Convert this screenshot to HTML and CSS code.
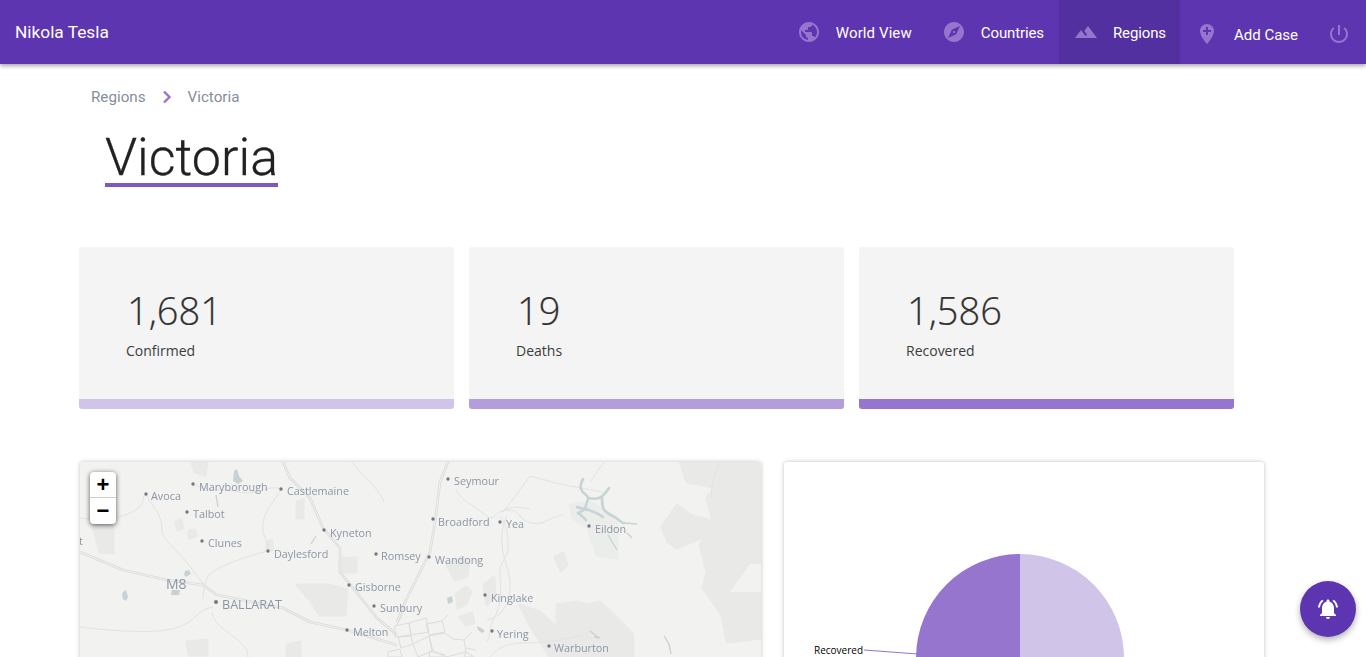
FILE: index.html
```html
<!DOCTYPE html>
<html lang="en">
<head>
    <meta charset="UTF-8">
    <meta name="viewport" content="width=device-width, initial-scale=1.0">
    <title>Victoria</title>
    <link rel="stylesheet" href="styles.css">
</head>
<body>
    <header class="topbar">
        <div class="brand">Nikola Tesla</div>
        <nav class="nav">
            <a class="nav-item world">
                <svg class="nav-icon" viewBox="0 0 24 24"><path d="M12 2C6.48 2 2 6.48 2 12s4.48 10 10 10 10-4.48 10-10S17.52 2 12 2zm-1 17.93c-3.95-.49-7-3.85-7-7.93 0-.62.08-1.21.21-1.79L9 15v1c0 1.1.9 2 2 2v1.93zm6.9-2.54c-.26-.81-1-1.39-1.9-1.39h-1v-3c0-.55-.45-1-1-1H8v-2h2c.55 0 1-.45 1-1V7h2c1.1 0 2-.9 2-2v-.41c2.93 1.19 5 4.06 5 7.41 0 2.08-.8 3.97-2.1 5.39z"/></svg>
                <span>World View</span>
            </a>
            <a class="nav-item narrow">
                <svg class="nav-icon" viewBox="0 0 24 24"><path d="M12 10.9c-.61 0-1.1.49-1.1 1.1s.49 1.1 1.1 1.1c.61 0 1.1-.49 1.1-1.1s-.49-1.1-1.1-1.1zM12 2C6.48 2 2 6.48 2 12s4.48 10 10 10 10-4.48 10-10S17.52 2 12 2zm2.19 12.19L6 18l3.81-8.19L18 6l-3.81 8.19z"/></svg>
                <span>Countries</span>
            </a>
            <a class="nav-item narrow active">
                <svg class="nav-icon" viewBox="0 0 24 24"><path d="M14 6l-3.75 5 2.85 3.8-1.6 1.2C9.81 13.75 7 10 7 10l-6 8h22L14 6z"/></svg>
                <span>Regions</span>
            </a>
            <a class="nav-item add-case">
                <svg class="nav-icon" viewBox="0 0 24 24"><path d="M12 2C8.14 2 5 5.14 5 9c0 5.25 7 13 7 13s7-7.75 7-13c0-3.86-3.14-7-7-7zm4 8h-3v3h-2v-3H8V8h3V5h2v3h3v2z"/></svg>
                <span>Add Case</span>
            </a>
            <a class="nav-item power">
                <svg class="nav-icon" viewBox="0 0 24 24"><path d="M13 3h-2v10h2V3zm4.83 2.17l-1.42 1.42C17.99 7.86 19 9.81 19 12c0 3.87-3.13 7-7 7s-7-3.13-7-7c0-2.19 1.01-4.14 2.58-5.42L6.17 5.17C4.23 6.82 3 9.26 3 12c0 4.97 4.03 9 9 9s9-4.03 9-9c0-2.74-1.23-5.18-3.17-6.83z"/></svg>
            </a>
        </nav>
    </header>

    <main class="content">
        <div class="breadcrumb">
            <span>Regions</span>
            <svg class="crumb-arrow" viewBox="0 0 10 14"><path d="M2 1.5l5.5 5.5L2 12.5" /></svg>
            <span>Victoria</span>
        </div>

        <h1 class="title">Victoria</h1>

        <section class="stats">
            <div class="stat stat-confirmed">
                <div class="stat-value">1,681</div>
                <div class="stat-label">Confirmed</div>
            </div>
            <div class="stat stat-deaths">
                <div class="stat-value">19</div>
                <div class="stat-label">Deaths</div>
            </div>
            <div class="stat stat-recovered">
                <div class="stat-value">1,586</div>
                <div class="stat-label">Recovered</div>
            </div>
        </section>

        <section class="panels">
            <div class="panel map-panel">
                <svg class="map" viewBox="80 462 681 300">
                    <rect class="land" x="80" y="462" width="681" height="300"/>

                    <g class="forest">
                        <path d="M680 462l7 20 28 5-8 11 6 24-13 23 7 27-4 16 19 27 5 27 34-4v-176z"/>
                        <path d="M662 527l15-22 13 10 23 7-13 16-23 10-9-6z"/>
                        <path d="M520 605l20 7 17 16v-23l20-3 10 3 13-3 17 16 16 17v22h-83l-20-32z"/>
                        <path d="M92 522h21v31l-13-1z"/>
                        <path d="M297 585h33l17 5-2 25h-25l-10-15z"/>
                        <path d="M340 558h16v14h-16z"/>
                        <path d="M187 642l20-2v15h-18z"/>
                        <path d="M287 645l13-3v15h-13z"/>
                        <path d="M297 502l6-2v18h-6z"/>
                        <path d="M192 462h15l-2 13-10-3z"/>
                        <path d="M267 542l5-2 1 10h-6z"/>
                        <path d="M176 522l5-2 2 8-5 2z"/>
                        <path d="M189 531l6-1 1 6-7 2z"/>
                        <path d="M447 565l14-8 8 4-2 15-12 4z"/>
                        <path d="M456 595l10-8 5 5-5 12-8 4z"/>
                        <path d="M484 585l10-8 1 18-8 10z"/>
                        <path d="M460 617l12-4 2 10-8 2z"/>
                        <path d="M555 557l8-4 4 12-6 6z"/>
                    </g>
                    <path class="forest-light" d="M570 505l20-3 27 16v40l-20-3-9-27-15-10z"/>
                    <path class="land" d="M730 592l20-28h11v28z"/>

                    <g class="roads">
                        <path d="M283 462l7 16 20 20 13 30 17 20v24l13 16 24 30 20 17"/>
                        <path d="M448 462l-8 20-5 40-5 30-10 20-15 30-8 20"/>
                        <path d="M80 552l43 18 44 10 36 5 14 10 66 13 27 14 37 8 50 15"/>
                    </g>
                    <g class="lanes">
                        <path d="M283 462l7 16 20 20 13 30 17 20v24l13 16 24 30 20 17"/>
                        <path d="M448 462l-8 20-5 40-5 30-10 20-15 30-8 20"/>
                        <path d="M80 552l43 18 44 10 36 5 14 10 66 13 27 14 37 8 50 15"/>
                    </g>

                    <g class="minor">
                        <path d="M146 494c6 14 16 18 16 36 0 10 14 18 26 34s16 20 18 24"/>
                        <path d="M80 518c20 2 36 2 52-6s8-14 14-18"/>
                        <path d="M193 484c14 8 30 4 46 8s30-8 42-3"/>
                        <path d="M281 489c-6 12-16 20-18 34s8 20 4 28c-20 6-44 12-58 24-4 6-6 14-6 24"/>
                        <path d="M213 607c-14 2-18 14-34 20s-50 6-99 0"/>
                        <path d="M212 612c2 14 18 20 28 30s6 8 8 15"/>
                        <path d="M456 490c8 12 18 16 28 24s8 2 16-2 16-2 20 4 16 10 24 6 20-8 20-8"/>
                        <path d="M500 516c8 10 8 22 8 32s-10 14-8 30 0 30-6 40-2 18-8 24"/>
                        <path d="M507 516c-6 10-6 24-4 36s10 26 6 44-14 22-22 24"/>
                        <path d="M530 476c-10 14-20 28-28 36 10-8 18-4 28-3"/>
                        <path d="M530 476l30 8 42 8"/>
                        <path d="M604 462l-14 20"/>
                        <path d="M490 657c8-10 18-14 32-14s40-2 60-8"/>
                        <path d="M352 462c10 14 24 22 32 40"/>
                        <path d="M720 462c-6 14-10 24-8 36"/>
                    </g>

                    <g class="water">
                        <path d="M583 479c-3 5-3 9-1 12s7 5 6 8-2 7-3 9-4 4-7 5"/>
                        <path d="M588 498c5 1 10 1 13-1s6-6 8-9"/>
                        <path d="M602 497c0 6 0 11 3 14s8 5 11 7 6 5 8 5"/>
                        <path d="M585 508c3 2 6 3 9 4s6 3 9 5"/>
                        <path d="M577 507c3 1 7 2 10 3"/>
                        <path d="M578 513c3 2 6 5 8 7"/>
                    </g>
                    <g class="water-thin">
                        <path d="M608 535l9 15M624 523l13 1M627 533l5 5M316 536l-5 8M216 495l2 12M664 636l5 8 2 10M590 631l5 4 5 3-6-1"/>
                    </g>
                    <g class="pond">
                        <path d="M234 471l3-2 2 7 4 5-5 3-5-3z"/>
                        <path d="M123 592l3-2 2 7-2 4-3-2-1-4z"/>
                        <path d="M185 571l4-1 2 4-5 3-2-2z"/>
                        <path d="M172 590h8l-1 5h-8z"/>
                        <path d="M447 598l5-2 1 6-5 2z"/>
                        <path d="M477 626l4 2 4 3-3 2-4-3z"/>
                    </g>

                    <g class="city">
                        <path d="M395 626l14-3 2 12-16 2zM409 623l17-5 3 14-18 3zM426 624l16-3 3 11-16 3zM429 636l16-3 8 6 11 1 2 12-20 5-13-6zM398 637l13-1 2 8-12 4zM413 644l16-8 3 15-14 6zM388 652l12-3 2 8h-14zM430 651l15 4-2 2h-14zM466 652l8 5h-10z"/>
                        <path d="M403 614l-7 12M442 621l6-6M464 640l8-8M466 648l10 2"/>
                    </g>

                    <g class="towns">
                        <circle cx="146" cy="494" r="1.7"/><text x="151" y="500">Avoca</text>
                        <circle cx="193" cy="484" r="1.7"/><text x="199" y="491">Maryborough</text>
                        <circle cx="187" cy="512" r="1.7"/><text x="193" y="518">Talbot</text>
                        <circle cx="202" cy="541" r="1.7"/><text x="208" y="547">Clunes</text>
                        <circle cx="281" cy="489" r="1.7"/><text x="287" y="495">Castlemaine</text>
                        <circle cx="324" cy="530" r="1.7"/><text x="330" y="537">Kyneton</text>
                        <circle cx="268" cy="551" r="1.7"/><text x="274" y="558">Daylesford</text>
                        <circle cx="376" cy="554" r="1.7"/><text x="381" y="560">Romsey</text>
                        <circle cx="349" cy="585" r="1.7"/><text x="355" y="591">Gisborne</text>
                        <circle cx="374" cy="606" r="1.7"/><text x="380" y="612">Sunbury</text>
                        <circle cx="347" cy="630" r="1.7"/><text x="353" y="636">Melton</text>
                        <circle cx="448" cy="479" r="1.7"/><text x="454" y="485">Seymour</text>
                        <circle cx="433" cy="519" r="1.7"/><text x="438" y="526">Broadford</text>
                        <circle cx="500" cy="522" r="1.7"/><text x="506" y="528">Yea</text>
                        <circle cx="589" cy="526" r="1.7"/><text x="595" y="533">Eildon</text>
                        <circle cx="429" cy="557" r="1.7"/><text x="435" y="564">Wandong</text>
                        <circle cx="485" cy="595" r="1.7"/><text x="491" y="602">Kinglake</text>
                        <circle cx="492" cy="631" r="1.7"/><text x="497" y="638">Yering</text>
                        <circle cx="549" cy="646" r="1.7"/><text x="554" y="652">Warburton</text>
                        <text x="79" y="545">t</text>
                    </g>
                    <circle class="town-dot" cx="216" cy="602" r="2"/>
                    <text class="big-town" x="222" y="609">BALLARAT</text>
                    <text class="road-label" x="166" y="589">M8</text>
                </svg>
                <div class="zoom-control">
                    <a class="zoom-btn">+</a>
                    <a class="zoom-btn">&#8722;</a>
                </div>
            </div>

            <div class="panel chart-panel">
                <svg class="chart" viewBox="784 462 480 300">
                    <path class="slice-recovered" d="M1020 554a104 104 0 0 0 0 208z"/>
                    <path class="slice-confirmed" d="M1020 554a104 104 0 0 1 0 208z"/>
                    <path class="chart-line" d="M864 650l54 4"/>
                    <text class="chart-label" x="814" y="654">Recovered</text>
                </svg>
            </div>
        </section>
    </main>

    <button class="fab">
        <svg viewBox="0 0 24 24"><path d="M7.58 4.08L6.15 2.65C3.75 4.48 2.17 7.3 2.03 10.5h2c.15-2.65 1.51-4.97 3.55-6.42zm12.39 6.42h2c-.15-3.2-1.73-6.02-4.12-7.85l-1.42 1.43c2.02 1.45 3.39 3.77 3.54 6.42zM18 11c0-3.07-1.64-5.64-4.5-6.32V4c0-.83-.67-1.5-1.5-1.5s-1.5.67-1.5 1.5v.68C7.63 5.36 6 7.92 6 11v5l-2 2v1h16v-1l-2-2v-5zm-6 11c.14 0 .27-.01.4-.04.65-.14 1.18-.58 1.44-1.18.1-.24.15-.5.15-.78h-4c.01 1.1.9 2 2.01 2z"/></svg>
    </button>
</body>
</html>
```

FILE: styles.css
```css
html, body {
    height: 100%;
    overflow: hidden;
}
body {
    margin: 0;
    font-family: 'Roboto', sans-serif;
    background: #fff;
    color: #212121;
}
.topbar {
    display: flex;
    align-items: stretch;
    justify-content: space-between;
    height: 64px;
    background: #5e35b1;
    color: #fff;
    box-shadow: 0 2px 4px rgba(0, 0, 0, 0.35);
    position: relative;
    z-index: 2;
}
.brand {
    display: flex;
    align-items: center;
    padding-left: 15px;
    font-size: 17.3px;
}
.nav {
    display: flex;
}
.nav-item {
    display: flex;
    align-items: center;
    gap: 15px;
    padding: 0 15px;
    font-size: 15px;
}
.nav-item span {
    margin-top: 2px;
}
.nav-item.world span {
    letter-spacing: 0.1px;
}
.nav-item.narrow span {
    letter-spacing: -0.12px;
}
.nav-item.active {
    background: #53309f;
    padding-right: 14px;
}
.nav-item.add-case {
    padding-right: 29px;
}
.nav-item.add-case span {
    margin-top: 5px;
}
.nav-item.add-case .nav-icon,
.nav-item.power .nav-icon {
    margin-top: 4px;
}
.nav-item.power {
    padding: 0 15px 0 0;
}
.nav-icon {
    width: 24px;
    height: 24px;
    fill: #9575cd;
}
.content {
    padding-left: 79px;
}
.breadcrumb {
    display: flex;
    align-items: center;
    gap: 16px;
    height: 20px;
    padding: 23px 0 0 12px;
    font-size: 15.2px;
    color: #868e9c;
}
.crumb-arrow {
    width: 10px;
    height: 14px;
    fill: none;
    stroke: #9575cd;
    stroke-width: 2.4;
}
.title {
    display: inline-block;
    margin: 26px 0 0 26px;
    font-size: 52px;
    font-weight: 300;
    line-height: 50px;
    border-bottom: 4px solid #7e57c2;
    color: #212121;
    -webkit-text-stroke: 0.3px #212121;
}
.stats {
    display: flex;
    gap: 15px;
    margin-top: 60px;
}
.stat {
    box-sizing: border-box;
    width: 375px;
    height: 162px;
    padding: 37px 47px 0;
    background: #f4f4f4;
    border-radius: 3px;
    border-bottom: 10px solid #d1c4e9;
    font-family: 'Open Sans', sans-serif;
    color: #323232;
}
.stat-deaths {
    border-bottom-color: #b39ddb;
}
.stat-recovered {
    border-bottom-color: #9575cd;
}
.stat-value {
    font-size: 38px;
    font-weight: 300;
    line-height: 52px;
    padding-left: 1px;
    -webkit-text-stroke: 0.2px #323232;
}
.stat-label {
    margin-top: 5px;
    font-size: 14px;
    line-height: 20px;
    color: #3c3c3c;
}
.panels {
    display: flex;
    gap: 23px;
    margin-top: 53px;
}
.panel {
    height: 300px;
    background: #fff;
    border-radius: 3px;
    box-shadow: 0 0 4px rgba(0, 0, 0, 0.25);
    overflow: hidden;
    position: relative;
}
.map-panel {
    margin-left: 1px;
    width: 681px;
}
.chart-panel {
    width: 480px;
}
.map, .chart {
    display: block;
    width: 100%;
    height: 100%;
}
.map {
    filter: blur(0.45px);
}
.land {
    fill: #f2f2f0;
}
.forest {
    fill: #e9eae8;
    stroke: #e9eae8;
    stroke-width: 3;
    stroke-linejoin: round;
}
.forest-light {
    fill: #ebedeb;
    stroke: #ebedeb;
    stroke-width: 3;
    stroke-linejoin: round;
}
.roads path {
    fill: none;
    stroke: #dadbda;
    stroke-width: 2.6;
    stroke-linejoin: round;
}
.lanes path {
    fill: none;
    stroke: #f2f2f0;
    stroke-width: 1;
    stroke-linejoin: round;
}
.minor path {
    fill: none;
    stroke: #e2e3e2;
    stroke-width: 1;
}
.water path {
    fill: none;
    stroke: #c8d3d6;
    stroke-width: 2.6;
    stroke-linecap: round;
}
.water-thin path {
    fill: none;
    stroke: #c8d2d5;
    stroke-width: 1.3;
}
.pond {
    fill: #c8d2d5;
}
.city path {
    fill: none;
    stroke: #dcdddd;
    stroke-width: 1;
}
.towns {
    font-family: 'Open Sans', sans-serif;
    font-size: 10.8px;
    fill: #8d96a6;
}
.towns circle, .town-dot {
    fill: #76787c;
}
.big-town {
    font-family: 'Open Sans', sans-serif;
    font-size: 12.6px;
    fill: #8d96a6;
}
.road-label {
    font-family: 'Open Sans', sans-serif;
    font-size: 14px;
    fill: #8d96a6;
}
.zoom-control {
    position: absolute;
    top: 10px;
    left: 10px;
    width: 26px;
    background: #fff;
    border-radius: 4px;
    box-shadow: 0 1px 5px rgba(0, 0, 0, 0.65);
}
.zoom-btn {
    display: block;
    height: 26px;
    line-height: 26px;
    text-align: center;
    font-family: 'Liberation Sans', sans-serif;
    font-size: 22px;
    font-weight: bold;
    color: #000;
}
.zoom-btn:first-child {
    border-bottom: 1px solid #ccc;
    height: 25px;
}
.slice-recovered {
    fill: #9575cd;
}
.slice-confirmed {
    fill: #d1c4e9;
}
.chart-line {
    fill: none;
    stroke: #9575cd;
    stroke-width: 1;
}
.chart-label {
    font-family: 'Open Sans', sans-serif;
    font-size: 10px;
    fill: #000;
}
.fab {
    position: fixed;
    right: 10px;
    bottom: 20px;
    width: 56px;
    height: 56px;
    padding: 16px;
    border: none;
    border-radius: 50%;
    background: #5e35b1;
    box-shadow: 0 3px 6px rgba(0, 0, 0, 0.3);
}
.fab svg {
    display: block;
    width: 24px;
    height: 24px;
    fill: #fff;
}
```
